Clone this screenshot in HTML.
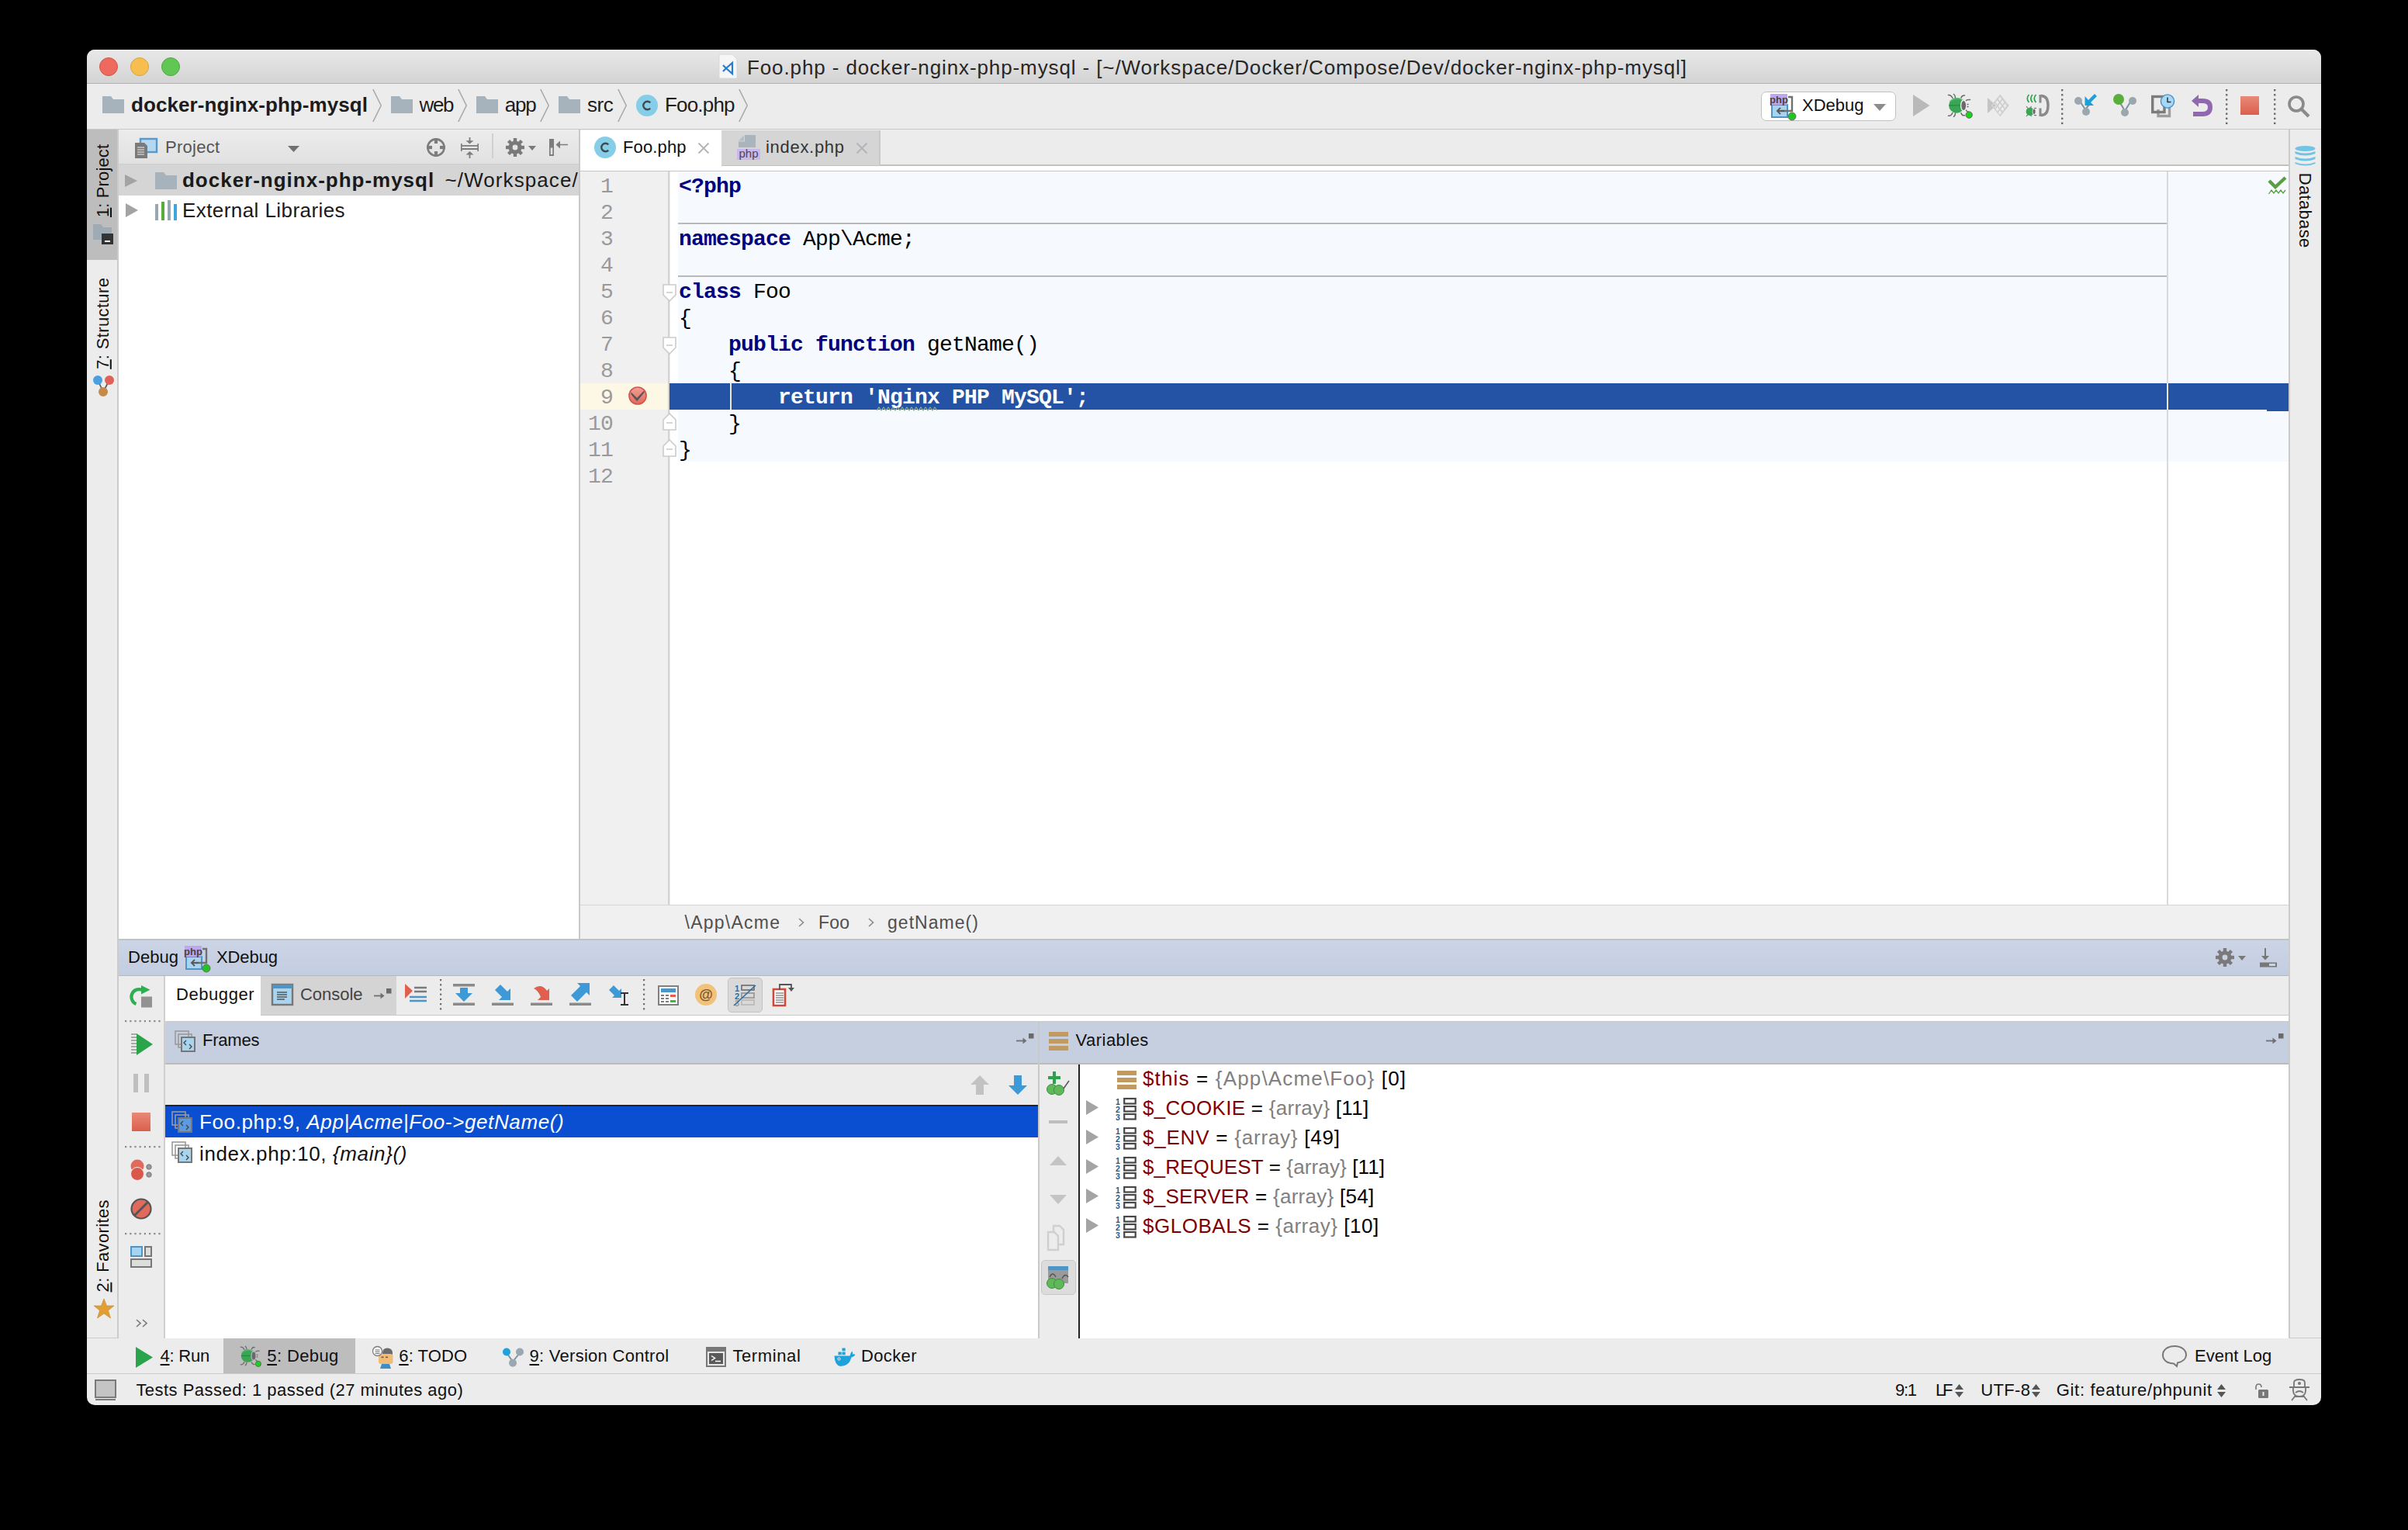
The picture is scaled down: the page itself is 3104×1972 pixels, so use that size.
<!DOCTYPE html>
<html><head><meta charset="utf-8">
<style>
html,body{margin:0;padding:0;}
body{width:3104px;height:1972px;background:#000;position:relative;overflow:hidden;font-family:"Liberation Sans",sans-serif;color:#000;}
.a{position:absolute;box-sizing:border-box;}
.t{position:absolute;white-space:pre;line-height:1;}
.win{left:112px;top:64px;width:2880px;height:1747px;background:#ececec;border-radius:10px;overflow:hidden;}
.in{position:absolute;left:-112px;top:-64px;width:3104px;height:1972px;}
svg{position:absolute;overflow:visible;}
</style></head><body>
<div class="a win"><div class="in">
<div class="a" style="left:112px;top:64px;width:2880px;height:44px;background:linear-gradient(#e9e9e9,#d3d3d3);border-bottom:1px solid #b1b1b1;"></div>
<div class="a" style="left:112px;top:108px;width:2880px;height:59px;background:#ececec;border-bottom:1px solid #c8c8c8;"></div>
<div class="a" style="left:112px;top:167px;width:41px;height:1558px;background:#ececec;border-right:2px solid #cbcbcb;"></div>
<div class="a" style="left:112px;top:167px;width:39px;height:168px;background:#bdbdbd;"></div>
<div class="a" style="left:2950px;top:167px;width:42px;height:1558px;background:#ececec;border-left:2px solid #cbcbcb;"></div>
<div class="a" style="left:153px;top:167px;width:594px;height:1043px;background:#fff;"></div>
<div class="a" style="left:153px;top:167px;width:594px;height:45px;background:linear-gradient(#ececec,#e1e1e1);border-bottom:1px solid #cdcdcd;"></div>
<div class="a" style="left:153px;top:212px;width:594px;height:40px;background:#d5d5d5;"></div>
<div class="a" style="left:746px;top:167px;width:2px;height:1043px;background:#c9c9c9;"></div>
<div class="a" style="left:748px;top:167px;width:2202px;height:47px;background:#ececec;border-bottom:2px solid #c2c2c2;"></div>
<div class="a" style="left:748px;top:214px;width:2202px;height:7px;background:#fff;border-bottom:1px solid #c5c5c5;"></div>
<div class="a" style="left:748px;top:168px;width:182px;height:52px;background:#fff;"></div>
<div class="a" style="left:930px;top:168px;width:205px;height:45px;background:#d5d5d5;border-right:2px solid #c9c9c9;"></div>
<div class="a" style="left:748px;top:221px;width:115px;height:945px;background:#f0f0f0;border-right:2px solid #d3d3d3;"></div>
<div class="a" style="left:864px;top:221px;width:2086px;height:945px;background:#fff;"></div>
<div class="a" style="left:874px;top:221px;width:2076px;height:374px;background:#f6f9fe;"></div>
<div class="a" style="left:748px;top:1166px;width:2202px;height:44px;background:#f0f0f0;border-top:1px solid #d5d5d5;"></div>
<div class="a" style="left:153px;top:1210px;width:2797px;height:48px;background:linear-gradient(#ccd5e6,#c3cde0);border-top:2px solid #c2c2c2;border-bottom:1px solid #b9bec8;"></div>
<div class="a" style="left:153px;top:1257px;width:2797px;height:468px;background:#ececec;"></div>
<div class="a" style="left:112px;top:1724px;width:2880px;height:47px;background:#ececec;border-top:1px solid #cbcbcb;border-bottom:1px solid #cbcbcb;"></div>
<svg style="left:128px;top:74px;" width="24" height="24" viewBox="0 0 24 24"><circle cx="12" cy="12" r="11.5" fill="#ee6a5f" stroke="#d2544a" stroke-width="1"/></svg>
<svg style="left:168px;top:74px;" width="24" height="24" viewBox="0 0 24 24"><circle cx="12" cy="12" r="11.5" fill="#f5be4f" stroke="#d9a23f" stroke-width="1"/></svg>
<svg style="left:208px;top:74px;" width="24" height="24" viewBox="0 0 24 24"><circle cx="12" cy="12" r="11.5" fill="#62c655" stroke="#4fa83f" stroke-width="1"/></svg>
<svg style="left:927px;top:70px;" width="24" height="31" viewBox="0 0 24 31"><path d="M0 0H17L23 6V31H0Z" fill="#f6f6f6" stroke="#d8d8d8" stroke-width="1"/><path d="M5 14L9 18L5 22M9 18L17 11V25L9 18" fill="none" stroke="#2a7bd0" stroke-width="2.2"/></svg>
<div class="t" style="left:963.0px;top:73.9px;font-family:'Liberation Sans',sans-serif;font-size:26px;color:#262626;letter-spacing:0.89px;">Foo.php - docker-nginx-php-mysql - [~/Workspace/Docker/Compose/Dev/docker-nginx-php-mysql]</div>
<svg style="left:132px;top:124px;" width="28" height="22" viewBox="0 0 28 22"><path d="M0 0H11L14 4H28V22H0Z" fill="#a7b3bc"/></svg>
<div class="t" style="left:169.0px;top:122.4px;font-family:'Liberation Sans',sans-serif;font-size:26px;color:#1c1c1c;font-weight:bold;letter-spacing:0.08px;">docker-nginx-php-mysql</div>
<svg style="left:480px;top:115px;" width="12" height="42" viewBox="0 0 12 42"><path d="M0.8 0L11.2 21.0L0.8 42" fill="none" stroke="#a9a9a9" stroke-width="1.6"/></svg>
<svg style="left:504px;top:124px;" width="28" height="22" viewBox="0 0 28 22"><path d="M0 0H11L14 4H28V22H0Z" fill="#a7b3bc"/></svg>
<div class="t" style="left:540.5px;top:122.4px;font-family:'Liberation Sans',sans-serif;font-size:26px;color:#1c1c1c;letter-spacing:-1.34px;">web</div>
<svg style="left:590px;top:115px;" width="12" height="42" viewBox="0 0 12 42"><path d="M0.8 0L11.2 21.0L0.8 42" fill="none" stroke="#a9a9a9" stroke-width="1.6"/></svg>
<svg style="left:614px;top:124px;" width="28" height="22" viewBox="0 0 28 22"><path d="M0 0H11L14 4H28V22H0Z" fill="#a7b3bc"/></svg>
<div class="t" style="left:650.7px;top:122.4px;font-family:'Liberation Sans',sans-serif;font-size:26px;color:#1c1c1c;letter-spacing:-1.18px;">app</div>
<svg style="left:696px;top:115px;" width="12" height="42" viewBox="0 0 12 42"><path d="M0.8 0L11.2 21.0L0.8 42" fill="none" stroke="#a9a9a9" stroke-width="1.6"/></svg>
<svg style="left:720px;top:124px;" width="28" height="22" viewBox="0 0 28 22"><path d="M0 0H11L14 4H28V22H0Z" fill="#a7b3bc"/></svg>
<div class="t" style="left:757.0px;top:122.4px;font-family:'Liberation Sans',sans-serif;font-size:26px;color:#1c1c1c;letter-spacing:-0.48px;">src</div>
<svg style="left:796px;top:115px;" width="12" height="42" viewBox="0 0 12 42"><path d="M0.8 0L11.2 21.0L0.8 42" fill="none" stroke="#a9a9a9" stroke-width="1.6"/></svg>
<svg style="left:820px;top:122px;" width="28" height="28" viewBox="0 0 28 28"><circle cx="14.0" cy="14.0" r="14.0" fill="#86cde8"/><path d="M18.2 10.4A5.2 5.2 0 1 0 18.2 17.6" fill="none" stroke="#3f4a50" stroke-width="2.4"/></svg>
<div class="t" style="left:857.0px;top:122.4px;font-family:'Liberation Sans',sans-serif;font-size:26px;color:#1c1c1c;letter-spacing:-0.81px;">Foo.php</div>
<svg style="left:952px;top:115px;" width="12" height="42" viewBox="0 0 12 42"><path d="M0.8 0L11.2 21.0L0.8 42" fill="none" stroke="#a9a9a9" stroke-width="1.6"/></svg>
<div class="a" style="left:2270px;top:118px;width:174px;height:38px;background:#fff;border:1px solid #c2c2c2;border-radius:7px;"></div>
<svg style="left:2282px;top:121px;" width="34" height="34" viewBox="0 0 34 34"><rect x="2" y="14" width="20" height="16" fill="#a8d4f0" stroke="#4d95c6" stroke-width="2"/><path d="M23 4H28V22H14" fill="none" stroke="#707070" stroke-width="2.4"/><path d="M18 22H9M13 18L9 22L13 26" fill="none" stroke="#5a5a5a" stroke-width="2"/><rect x="0" y="0" width="22" height="14" fill="#bba7f2"/><text x="11" y="11.5" font-family="Liberation Sans" font-size="13" font-weight="bold" fill="#444" text-anchor="middle">php</text><circle cx="28" cy="29" r="5" fill="#22c322" stroke="#606060" stroke-width="0.8"/></svg>
<div class="t" style="left:2323.0px;top:125.3px;font-family:'Liberation Sans',sans-serif;font-size:22px;color:#111;">XDebug</div>
<svg style="left:2415px;top:134px;" width="16" height="9" viewBox="0 0 16 9"><path d="M0 0H16L8 9Z" fill="#8c8c8c"/></svg>
<svg style="left:2466px;top:122px;" width="22" height="28" viewBox="0 0 22 28"><path d="M0 0L21.5 14L0 28Z" fill="#b9b9b9"/></svg>
<svg style="left:2510px;top:120px;" width="34.0" height="34.0" viewBox="0 0 34.0 34.0"><g transform="scale(1.0)"><g fill="none" stroke="#6a6a6a" stroke-width="1.5" stroke-linecap="round"><path d="M1.5 2.5Q5 2 7 6.5M8.5 1.5Q10.5 3 10.5 6M18 6Q19 2.5 22.5 3"/><path d="M1.5 29.3Q5 29.8 7 25.3M8.5 30.3Q10.5 28.8 10.5 25.8M18 25.8Q19 29.3 22.5 28.8"/><path d="M24 10Q25 8 29.5 8.5M24.5 14.5H27M24.5 17.5H27M24 21.5Q25 24 28 24.5"/></g><ellipse cx="12.3" cy="15.9" rx="10.2" ry="9.8" fill="#3aa655"/><path d="M3 11Q12 4 21 9" stroke="#5cc274" stroke-width="2" fill="none" opacity="0.6"/><path d="M2.3 15.9H19" stroke="#2a8443" stroke-width="1.3"/><ellipse cx="21.3" cy="15.9" rx="4.4" ry="7.6" fill="#ececec"/><ellipse cx="21.2" cy="15.9" rx="2.9" ry="6" fill="#6a6a6a"/><circle cx="28.2" cy="28.1" r="4.2" fill="#19d419" stroke="#5a5a5a" stroke-width="0.9"/></g></svg>
<svg style="left:2560px;top:120px;" width="32" height="32" viewBox="0 0 32 32"><defs><clipPath id="dia"><path d="M7 15.9L18.3 2L29.6 15.9L18.3 29.8Z"/></clipPath></defs><path d="M2 6L13 16L2 26Z" fill="#c4c4c4"/><g clip-path="url(#dia)" stroke="#cdcdcd" stroke-width="1.6"><path d="M-10.0 32L14.0 0"/><path d="M-3.5 32L20.5 0"/><path d="M3.0 32L27.0 0"/><path d="M9.5 32L33.5 0"/><path d="M16.0 32L40.0 0"/><path d="M22.5 32L46.5 0"/><path d="M-4.0 0L20.0 32"/><path d="M2.5 0L26.5 32"/><path d="M9.0 0L33.0 32"/><path d="M15.5 0L39.5 32"/><path d="M22.0 0L46.0 32"/><path d="M28.5 0L52.5 32"/></g><path d="M7 15.9L18.3 2L29.6 15.9L18.3 29.8Z" fill="none" stroke="#d6d6d6" stroke-width="1"/></svg>
<svg style="left:2610px;top:120px;" width="32" height="32" viewBox="0 0 32 32"><g fill="none" stroke="#2aa44b" stroke-width="1.7"><path d="M5.5 2Q1 7 5.5 12"/><path d="M10 2Q5.5 7 10 12"/><path d="M14.5 2Q10 7 14.5 12"/></g><path d="M21 3.5Q30 3.5 30 16Q30 28.5 21 28.5" fill="none" stroke="#8a8a8a" stroke-width="3.4"/><rect x="18.5" y="2" width="3" height="10.5" fill="#8a8a8a"/><rect x="18.5" y="19.5" width="3" height="10.5" fill="#8a8a8a"/><g stroke="#6a6a6a" stroke-width="1.1" fill="none"><path d="M2 17L4 19.5M8.5 17L7 19.5M2 30L4 27.5M8.5 30L7 27.5M12 20Q13 19 15 19.5M12 28Q13 29 15 28.5"/></g><ellipse cx="6.8" cy="23.8" rx="5.2" ry="5.3" fill="#3aa655"/><ellipse cx="12" cy="23.8" rx="2.4" ry="4" fill="#ececec"/><ellipse cx="12" cy="23.8" rx="1.6" ry="3.2" fill="#6a6a6a"/></svg>
<svg style="left:2657px;top:115px;" width="3" height="44" viewBox="0 0 3 44"><rect x="0" y="0.0" width="2.4" height="2.4" fill="#6c6c6c"/><rect x="0" y="6.1" width="2.4" height="2.4" fill="#6c6c6c"/><rect x="0" y="12.2" width="2.4" height="2.4" fill="#6c6c6c"/><rect x="0" y="18.3" width="2.4" height="2.4" fill="#6c6c6c"/><rect x="0" y="24.4" width="2.4" height="2.4" fill="#6c6c6c"/><rect x="0" y="30.5" width="2.4" height="2.4" fill="#6c6c6c"/><rect x="0" y="36.6" width="2.4" height="2.4" fill="#6c6c6c"/><rect x="0" y="42.7" width="2.4" height="2.4" fill="#6c6c6c"/></svg>
<svg style="left:2869px;top:115px;" width="3" height="44" viewBox="0 0 3 44"><rect x="0" y="0.0" width="2.4" height="2.4" fill="#6c6c6c"/><rect x="0" y="6.1" width="2.4" height="2.4" fill="#6c6c6c"/><rect x="0" y="12.2" width="2.4" height="2.4" fill="#6c6c6c"/><rect x="0" y="18.3" width="2.4" height="2.4" fill="#6c6c6c"/><rect x="0" y="24.4" width="2.4" height="2.4" fill="#6c6c6c"/><rect x="0" y="30.5" width="2.4" height="2.4" fill="#6c6c6c"/><rect x="0" y="36.6" width="2.4" height="2.4" fill="#6c6c6c"/><rect x="0" y="42.7" width="2.4" height="2.4" fill="#6c6c6c"/></svg>
<svg style="left:2931px;top:115px;" width="3" height="44" viewBox="0 0 3 44"><rect x="0" y="0.0" width="2.4" height="2.4" fill="#6c6c6c"/><rect x="0" y="6.1" width="2.4" height="2.4" fill="#6c6c6c"/><rect x="0" y="12.2" width="2.4" height="2.4" fill="#6c6c6c"/><rect x="0" y="18.3" width="2.4" height="2.4" fill="#6c6c6c"/><rect x="0" y="24.4" width="2.4" height="2.4" fill="#6c6c6c"/><rect x="0" y="30.5" width="2.4" height="2.4" fill="#6c6c6c"/><rect x="0" y="36.6" width="2.4" height="2.4" fill="#6c6c6c"/><rect x="0" y="42.7" width="2.4" height="2.4" fill="#6c6c6c"/></svg>
<svg style="left:2674px;top:121px;" width="30" height="30" viewBox="0 0 30 30"><path d="M6 8L14 20M19 14L14 20" stroke="#7f909b" stroke-width="2"/><circle cx="5" cy="9" r="5" fill="#9aa7b0"/><circle cx="15" cy="23" r="5" fill="#9aa7b0"/><path d="M13.5 3V15H25L21 11L29 3L26 0L18 8L13.5 3Z" fill="#1a9fdb"/></svg>
<svg style="left:2724px;top:121px;" width="30" height="30" viewBox="0 0 30 30"><path d="M7 8L15 22M23 9L15 22" stroke="#7f909b" stroke-width="2"/><circle cx="7" cy="7" r="7" fill="#5aae3b"/><circle cx="25" cy="9" r="5" fill="#9aa7b0"/><circle cx="15" cy="24" r="5" fill="#9aa7b0"/></svg>
<svg style="left:2773px;top:121px;" width="30" height="31" viewBox="0 0 30 31"><path d="M9 20V28.5H23.5V17" fill="none" stroke="#9d9d9d" stroke-width="3.4"/><rect x="1.7" y="3.5" width="15.3" height="20" fill="none" stroke="#7b7b7b" stroke-width="3.4"/><circle cx="21" cy="9.5" r="8.6" fill="#a7d8f5" stroke="#4a8fc4" stroke-width="1.4"/><path d="M21 4.5V10.5H25.5" fill="none" stroke="#333" stroke-width="1.5"/></svg>
<svg style="left:2825px;top:122px;" width="28" height="28" viewBox="0 0 28 28"><path d="M0 8L9 0V5H14Q27 5 27 16Q27 28 14 28H2V22H14Q21 22 21 16Q21 11 14 11H9V16Z" fill="#9168b0"/></svg>
<div class="a" style="left:2888px;top:124px;width:24px;height:24px;background:linear-gradient(#e98a78,#db5e4c);"></div>
<svg style="left:2948px;top:122px;" width="30" height="30" viewBox="0 0 30 30"><circle cx="12" cy="12" r="9" fill="none" stroke="#8a8a8a" stroke-width="3.6"/><path d="M18 18L28 28" stroke="#8a8a8a" stroke-width="4.2"/></svg>
<div class="t" style="left:86.0px;top:222.0px;width:98.0px;height:22px;font-size:22px;line-height:22px;color:#111;letter-spacing:0.12px;transform:rotate(-90deg);transform-origin:47.0px 11.0px;"><u style="text-decoration-thickness:2px;text-underline-offset:2px">1</u>: Project</div>
<svg style="left:120px;top:289px;" width="27" height="26" viewBox="0 0 27 26"><path d="M0 0H10L13 4H24V20H0Z" fill="#9eabb5"/><rect x="11" y="12" width="15" height="14" fill="#333"/><rect x="15" y="21" width="7" height="2" fill="#fff"/></svg>
<div class="t" style="left:74.2px;top:405.5px;width:121.7px;height:22px;font-size:22px;line-height:22px;color:#111;letter-spacing:0.36px;transform:rotate(-90deg);transform-origin:58.8px 11.0px;"><u style="text-decoration-thickness:2px;text-underline-offset:2px">7</u>: Structure</div>
<svg style="left:120px;top:483px;" width="27" height="28" viewBox="0 0 27 28"><path d="M6 7L13 22M21 7L13 22" stroke="#555" stroke-width="1.6"/><circle cx="6" cy="7" r="6" fill="#4a9fe0"/><circle cx="21" cy="7" r="6" fill="#e0605a"/><circle cx="13" cy="22" r="6" fill="#c48a4a"/></svg>
<div class="t" style="left:73.6px;top:1594.8px;width:122.9px;height:22px;font-size:22px;line-height:22px;color:#111;letter-spacing:0.36px;transform:rotate(-90deg);transform-origin:59.4px 11.0px;"><u style="text-decoration-thickness:2px;text-underline-offset:2px">2</u>: Favorites</div>
<svg style="left:120.5px;top:1674px;" width="26" height="26" viewBox="0 0 26 26"><path d="M13 0L16.5 9H26L18.5 15L21.5 25L13 19L4.5 25L7.5 15L0 9H9.5Z" fill="#e09e35" stroke="#c98424" stroke-width="0.6"/></svg>
<div class="t" style="left:2922.8px;top:260.2px;width:100.4px;height:22px;font-size:22px;line-height:22px;color:#111;letter-spacing:0.32px;transform:rotate(90deg);transform-origin:48.2px 11.0px;">Database</div>
<svg style="left:2958px;top:188px;" width="27" height="26" viewBox="0 0 27 26"><ellipse cx="13.5" cy="3.5" rx="13" ry="3.5" fill="#72c4e6"/><path d="M0.5 7Q13.5 12 26.5 7V10Q13.5 15 0.5 10Z" fill="#72c4e6"/><path d="M0.5 14Q13.5 19 26.5 14V17Q13.5 22 0.5 17Z" fill="#72c4e6"/><path d="M0.5 21Q13.5 26 26.5 21V23Q13.5 28 0.5 23Z" fill="#72c4e6"/></svg>
<svg style="left:174px;top:178px;" width="30" height="28" viewBox="0 0 30 28"><rect x="7" y="1" width="21" height="17" fill="#b4d8f2" stroke="#5c98c6" stroke-width="2.4"/><path d="M0 6H12L16 10V26H0Z" fill="#7a7a7a"/><path d="M3 12H12M3 15H12M3 18H12M3 21H12" stroke="#eee" stroke-width="1.2"/></svg>
<div class="t" style="left:213.0px;top:178.8px;font-family:'Liberation Sans',sans-serif;font-size:22px;color:#555;letter-spacing:0.26px;">Project</div>
<svg style="left:371px;top:188px;" width="15" height="8" viewBox="0 0 15 8"><path d="M0 0H15L7.5 8Z" fill="#707070"/></svg>
<svg style="left:550px;top:178px;" width="24" height="24" viewBox="0 0 24 24"><circle cx="12" cy="12" r="10.6" fill="none" stroke="#7d7d7d" stroke-width="2.6"/><rect x="9.9" y="0" width="4.2" height="7" fill="#7d7d7d"/><rect x="9.9" y="17" width="4.2" height="7" fill="#7d7d7d"/><rect x="0" y="9.9" width="7" height="4.2" fill="#7d7d7d"/><rect x="17" y="9.9" width="7" height="4.2" fill="#7d7d7d"/></svg>
<svg style="left:594px;top:177px;" width="23" height="27" viewBox="0 0 23 27"><path d="M1 10.8H22M1 15H22" stroke="#7d7d7d" stroke-width="1.8"/><path d="M0.8 8V18M22.2 8V18" stroke="#7d7d7d" stroke-width="1.6"/><path d="M11.5 0V5M11.5 22V27" stroke="#7d7d7d" stroke-width="1.8"/><path d="M6.5 4.2H16.5L11.5 8.5Z M6.5 22.5H16.5L11.5 18Z" fill="#7d7d7d"/></svg>
<div class="a" style="left:634px;top:172px;width:2px;height:32px;background:#d0d0d0;"></div>
<svg style="left:652px;top:178px;" width="40" height="24" viewBox="0 0 40 24"><g transform="translate(12 12)"><rect x="-2.2" y="-12" width="4.4" height="6" fill="#7a7a7a" transform="rotate(0)"/><rect x="-2.2" y="-12" width="4.4" height="6" fill="#7a7a7a" transform="rotate(45)"/><rect x="-2.2" y="-12" width="4.4" height="6" fill="#7a7a7a" transform="rotate(90)"/><rect x="-2.2" y="-12" width="4.4" height="6" fill="#7a7a7a" transform="rotate(135)"/><rect x="-2.2" y="-12" width="4.4" height="6" fill="#7a7a7a" transform="rotate(180)"/><rect x="-2.2" y="-12" width="4.4" height="6" fill="#7a7a7a" transform="rotate(225)"/><rect x="-2.2" y="-12" width="4.4" height="6" fill="#7a7a7a" transform="rotate(270)"/><rect x="-2.2" y="-12" width="4.4" height="6" fill="#7a7a7a" transform="rotate(315)"/><circle r="8.6" fill="#7a7a7a"/><circle r="3.4" fill="#e6e6e6"/></g><path d="M29 10H39L34 16Z" fill="#7a7a7a"/></svg>
<svg style="left:707px;top:178px;" width="26" height="24" viewBox="0 0 26 24"><rect x="1" y="1" width="6" height="22" fill="#7d7d7d"/><rect x="2.7" y="12.5" width="2.6" height="8.5" fill="#e4e4e4"/><path d="M13 8.5H25" stroke="#7d7d7d" stroke-width="1.6"/><path d="M9.5 8.5L15 3.5V13.5Z" fill="#7d7d7d"/></svg>
<svg style="left:161px;top:225px;" width="16" height="16" viewBox="0 0 16 16"><path d="M0 0L16 8.0L0 16Z" fill="#a3a3a3"/></svg>
<svg style="left:200px;top:222px;" width="28" height="22" viewBox="0 0 28 22"><path d="M0 0H11L14 4H28V22H0Z" fill="#a7b3bc"/></svg>
<div class="t" style="left:235.0px;top:218.9px;font-family:'Liberation Sans',sans-serif;font-size:26px;color:#1a1a1a;font-weight:bold;letter-spacing:0.99px;">docker-nginx-php-mysql</div>
<div class="t" style="left:573.6px;top:218.9px;font-family:'Liberation Sans',sans-serif;font-size:26px;color:#1a1a1a;letter-spacing:1.08px;">~/Workspace/</div>
<svg style="left:162px;top:262px;" width="16" height="18" viewBox="0 0 16 18"><path d="M0 0L16 9.0L0 18Z" fill="#a3a3a3"/></svg>
<svg style="left:200px;top:258px;" width="28" height="26" viewBox="0 0 28 26"><rect x="0" y="5" width="4" height="21" fill="#9aa7b0"/><rect x="8" y="2" width="4" height="24" fill="#56ad3a"/><rect x="16" y="0" width="4" height="26" fill="#9aa7b0"/><rect x="24" y="5" width="4" height="21" fill="#41a5dc"/></svg>
<div class="t" style="left:235.0px;top:257.9px;font-family:'Liberation Sans',sans-serif;font-size:26px;color:#1a1a1a;letter-spacing:0.43px;">External Libraries</div>
<svg style="left:766px;top:176px;" width="28" height="28" viewBox="0 0 28 28"><circle cx="14.0" cy="14.0" r="14.0" fill="#86cde8"/><path d="M18.2 10.4A5.2 5.2 0 1 0 18.2 17.6" fill="none" stroke="#3f4a50" stroke-width="2.4"/></svg>
<div class="t" style="left:803.0px;top:179.3px;font-family:'Liberation Sans',sans-serif;font-size:22px;color:#111;letter-spacing:0.13px;">Foo.php</div>
<svg style="left:900px;top:184px;" width="14" height="14" viewBox="0 0 14 14"><path d="M0.5 0.5L13.5 13.5M13.5 0.5L0.5 13.5" stroke="#b0b4b8" stroke-width="1.8"/></svg>
<svg style="left:950px;top:174px;" width="31" height="32" viewBox="0 0 31 32"><path d="M10 0H24V16H2V8.5H10Z" fill="#a9b4bc"/><path d="M2 7.5L9 0.5V7.5Z" fill="#b3bdc4"/><rect x="0" y="18" width="30" height="14" fill="#c9b8ea"/><text x="15" y="29.2" font-family="Liberation Sans" font-size="15" fill="#4d4458" text-anchor="middle">php</text></svg>
<div class="t" style="left:987.0px;top:179.3px;font-family:'Liberation Sans',sans-serif;font-size:22px;color:#333;letter-spacing:0.70px;">index.php</div>
<svg style="left:1104px;top:184px;" width="14" height="14" viewBox="0 0 14 14"><path d="M0.5 0.5L13.5 13.5M13.5 0.5L0.5 13.5" stroke="#b0b4b8" stroke-width="1.8"/></svg>
<div class="a" style="left:874px;top:287px;width:1920px;height:2px;background:#b9b9b9;"></div>
<div class="a" style="left:874px;top:355px;width:1920px;height:2px;background:#b9b9b9;"></div>
<div class="a" style="left:2793px;top:221px;width:2px;height:945px;background:#dadada;"></div>
<div class="a" style="left:748px;top:494px;width:113px;height:34px;background:#fdf8e6;"></div>
<div class="a" style="left:863px;top:494px;width:2087px;height:34px;background:#2453a6;"></div>
<div class="a" style="left:2922px;top:526px;width:28px;height:4px;background:#2453a6;"></div>
<div class="a" style="left:2793px;top:494px;width:2px;height:34px;background:#efe8d4;"></div>
<div class="a" style="left:941px;top:493px;width:2px;height:35px;background:#efe8d4;"></div>
<div class="t" style="left:774.0px;top:226.7px;font-family:'Liberation Mono',monospace;font-size:28px;color:#9a9a9a;letter-spacing:-0.80px;">1</div>
<div class="t" style="left:774.0px;top:260.7px;font-family:'Liberation Mono',monospace;font-size:28px;color:#9a9a9a;letter-spacing:-0.80px;">2</div>
<div class="t" style="left:774.0px;top:294.7px;font-family:'Liberation Mono',monospace;font-size:28px;color:#9a9a9a;letter-spacing:-0.80px;">3</div>
<div class="t" style="left:774.0px;top:328.7px;font-family:'Liberation Mono',monospace;font-size:28px;color:#9a9a9a;letter-spacing:-0.80px;">4</div>
<div class="t" style="left:774.0px;top:362.7px;font-family:'Liberation Mono',monospace;font-size:28px;color:#9a9a9a;letter-spacing:-0.80px;">5</div>
<div class="t" style="left:774.0px;top:396.7px;font-family:'Liberation Mono',monospace;font-size:28px;color:#9a9a9a;letter-spacing:-0.80px;">6</div>
<div class="t" style="left:774.0px;top:430.7px;font-family:'Liberation Mono',monospace;font-size:28px;color:#9a9a9a;letter-spacing:-0.80px;">7</div>
<div class="t" style="left:774.0px;top:464.7px;font-family:'Liberation Mono',monospace;font-size:28px;color:#9a9a9a;letter-spacing:-0.80px;">8</div>
<div class="t" style="left:774.0px;top:498.7px;font-family:'Liberation Mono',monospace;font-size:28px;color:#9a9a9a;letter-spacing:-0.80px;">9</div>
<div class="t" style="left:758.0px;top:532.7px;font-family:'Liberation Mono',monospace;font-size:28px;color:#9a9a9a;letter-spacing:-0.80px;">10</div>
<div class="t" style="left:758.0px;top:566.7px;font-family:'Liberation Mono',monospace;font-size:28px;color:#9a9a9a;letter-spacing:-0.80px;">11</div>
<div class="t" style="left:758.0px;top:600.7px;font-family:'Liberation Mono',monospace;font-size:28px;color:#9a9a9a;letter-spacing:-0.80px;">12</div>
<div class="t" style="left:875.0px;top:226.7px;font-family:'Liberation Mono',monospace;font-size:28px;letter-spacing:-0.80px;"><b style="color:#000080">&lt;?php</b></div>
<div class="t" style="left:875.0px;top:294.7px;font-family:'Liberation Mono',monospace;font-size:28px;letter-spacing:-0.80px;"><b style="color:#000080">namespace</b><span style="color:#000"> App\Acme;</span></div>
<div class="t" style="left:875.0px;top:362.7px;font-family:'Liberation Mono',monospace;font-size:28px;letter-spacing:-0.80px;"><b style="color:#000080">class</b><span style="color:#000"> Foo</span></div>
<div class="t" style="left:875.0px;top:396.7px;font-family:'Liberation Mono',monospace;font-size:28px;letter-spacing:-0.80px;"><span style="color:#000">{</span></div>
<div class="t" style="left:939.0px;top:430.7px;font-family:'Liberation Mono',monospace;font-size:28px;letter-spacing:-0.80px;"><b style="color:#000080">public</b><span style="color:#000"> </span><b style="color:#000080">function</b><span style="color:#000"> getName()</span></div>
<div class="t" style="left:939.0px;top:464.7px;font-family:'Liberation Mono',monospace;font-size:28px;letter-spacing:-0.80px;"><span style="color:#000">{</span></div>
<div class="t" style="left:1003.0px;top:498.7px;font-family:'Liberation Mono',monospace;font-size:28px;letter-spacing:-0.80px;"><b style="color:#fff">return 'Nginx PHP MySQL';</b></div>
<div class="t" style="left:939.0px;top:532.7px;font-family:'Liberation Mono',monospace;font-size:28px;letter-spacing:-0.80px;"><span style="color:#000">}</span></div>
<div class="t" style="left:875.0px;top:566.7px;font-family:'Liberation Mono',monospace;font-size:28px;letter-spacing:-0.80px;"><span style="color:#000">}</span></div>
<svg style="left:1130px;top:524px;" width="80" height="6" viewBox="0 0 80 6"><path d="M0 5L3 1L6 5L9 1L12 5L15 1L18 5L21 1L24 5L27 1L30 5L33 1L36 5L39 1L42 5L45 1L48 5L51 1L54 5L57 1L60 5L63 1L66 5L69 1L72 5L75 1L78 5" fill="none" stroke="#8fb38a" stroke-width="1.2"/></svg>
<svg style="left:810px;top:498px;" width="24" height="24" viewBox="0 0 24 24"><defs><linearGradient id="bp" x1="0" y1="0" x2="0" y2="1"><stop offset="0" stop-color="#f0a096"/><stop offset="1" stop-color="#e06a5e"/></linearGradient></defs><circle cx="12" cy="12" r="11" fill="url(#bp)" stroke="#d5554b" stroke-width="1.7"/><path d="M3.6 7.6L11.1 15L20.2 5.4L20.6 7.8L11.1 19.2L3.4 10.2Z" fill="#555"/></svg>
<svg style="left:853.5px;top:366px;" width="18" height="23" viewBox="0 0 18 23"><path d="M1 1H17V14L9 22L1 14Z" fill="#fff" stroke="#cbcbcb" stroke-width="1.6"/><path d="M5 11H13" stroke="#cbcbcb" stroke-width="1.6"/></svg>
<svg style="left:853.5px;top:434px;" width="18" height="23" viewBox="0 0 18 23"><path d="M1 1H17V14L9 22L1 14Z" fill="#fff" stroke="#cbcbcb" stroke-width="1.6"/><path d="M5 11H13" stroke="#cbcbcb" stroke-width="1.6"/></svg>
<svg style="left:853.5px;top:533px;" width="18" height="23" viewBox="0 0 18 23"><path d="M1 21H17V8L9 0L1 8Z" fill="#fff" stroke="#cbcbcb" stroke-width="1.6"/><path d="M5 12H13" stroke="#cbcbcb" stroke-width="1.6"/></svg>
<svg style="left:853.5px;top:567px;" width="18" height="23" viewBox="0 0 18 23"><path d="M1 21H17V8L9 0L1 8Z" fill="#fff" stroke="#cbcbcb" stroke-width="1.6"/><path d="M5 12H13" stroke="#cbcbcb" stroke-width="1.6"/></svg>
<svg style="left:2924px;top:226px;" width="23" height="25" viewBox="0 0 23 25"><path d="M1 7L9 15L22 3" fill="none" stroke="#5a9e42" stroke-width="4.4"/><path d="M0.5 24L4 19L7 23L10 19L13 23L16 19L19 23L22 19" fill="none" stroke="#5a9e42" stroke-width="1.3"/></svg>
<div class="t" style="left:882.5px;top:1178.0px;font-family:'Liberation Sans',sans-serif;font-size:23px;color:#4f4f4f;letter-spacing:1.25px;">\App\Acme</div>
<svg style="left:1029px;top:1183px;" width="8" height="12" viewBox="0 0 8 12"><path d="M1 1L6.5 6L1 11" fill="none" stroke="#8a8a8a" stroke-width="1.6"/></svg>
<div class="t" style="left:1055.0px;top:1178.0px;font-family:'Liberation Sans',sans-serif;font-size:23px;color:#4f4f4f;letter-spacing:0.18px;">Foo</div>
<svg style="left:1119px;top:1183px;" width="8" height="12" viewBox="0 0 8 12"><path d="M1 1L6.5 6L1 11" fill="none" stroke="#8a8a8a" stroke-width="1.6"/></svg>
<div class="t" style="left:1144.0px;top:1178.0px;font-family:'Liberation Sans',sans-serif;font-size:23px;color:#4f4f4f;letter-spacing:1.04px;">getName()</div>
<div class="a" style="left:153px;top:1257px;width:60px;height:468px;background:#ececec;border-right:2px solid #cfcfcf;"></div>
<div class="a" style="left:213px;top:1257px;width:123px;height:59px;background:#fff;"></div>
<div class="a" style="left:336px;top:1257px;width:175px;height:52px;background:#d4d4d4;"></div>
<div class="a" style="left:511px;top:1257px;width:2439px;height:52px;background:#ececec;border-bottom:1px solid #c9c9c9;"></div>
<div class="a" style="left:213px;top:1309px;width:2737px;height:8px;background:#fff;border-bottom:1px solid #c9c9c9;"></div>
<div class="a" style="left:336px;top:1308px;width:175px;height:1px;background:#c9c9c9;"></div>
<div class="a" style="left:153px;top:1257px;width:2797px;height:1px;background:#b3b9c3;"></div>
<div class="a" style="left:213px;top:1317px;width:2737px;height:55px;background:#c6cfe0;border-bottom:2px solid #bcbcbc;"></div>
<div class="a" style="left:1338px;top:1317px;width:2px;height:408px;background:#c9c9c9;"></div>
<div class="a" style="left:213px;top:1372px;width:1125px;height:52px;background:#ececec;"></div>
<div class="a" style="left:213px;top:1424px;width:1125px;height:2px;background:#26231f;"></div>
<div class="a" style="left:213px;top:1426px;width:1125px;height:40px;background:#0a4fd2;"></div>
<div class="a" style="left:213px;top:1466px;width:1125px;height:259px;background:#fff;"></div>
<div class="a" style="left:1340px;top:1372px;width:50px;height:353px;background:#ececec;"></div>
<div class="a" style="left:1390px;top:1372px;width:2px;height:353px;background:#222;"></div>
<div class="a" style="left:1392px;top:1372px;width:1558px;height:353px;background:#fff;"></div>
<div class="t" style="left:165.0px;top:1223.3px;font-family:'Liberation Sans',sans-serif;font-size:22px;color:#111;letter-spacing:0.04px;">Debug</div>
<svg style="left:238px;top:1219px;" width="34" height="34" viewBox="0 0 34 34"><rect x="2" y="14" width="20" height="16" fill="#a8d4f0" stroke="#4d95c6" stroke-width="2"/><path d="M23 4H28V22H14" fill="none" stroke="#707070" stroke-width="2.4"/><path d="M18 22H9M13 18L9 22L13 26" fill="none" stroke="#5a5a5a" stroke-width="2"/><rect x="0" y="0" width="22" height="14" fill="#bba7f2"/><text x="11" y="11.5" font-family="Liberation Sans" font-size="13" font-weight="bold" fill="#444" text-anchor="middle">php</text><circle cx="28" cy="29" r="5" fill="#22c322" stroke="#606060" stroke-width="0.8"/></svg>
<div class="t" style="left:279.0px;top:1223.3px;font-family:'Liberation Sans',sans-serif;font-size:22px;color:#111;letter-spacing:-0.10px;">XDebug</div>
<svg style="left:2856px;top:1222px;" width="40" height="24" viewBox="0 0 40 24"><g transform="translate(12 12)"><rect x="-2.2" y="-12" width="4.4" height="6" fill="#7a7a7a" transform="rotate(0)"/><rect x="-2.2" y="-12" width="4.4" height="6" fill="#7a7a7a" transform="rotate(45)"/><rect x="-2.2" y="-12" width="4.4" height="6" fill="#7a7a7a" transform="rotate(90)"/><rect x="-2.2" y="-12" width="4.4" height="6" fill="#7a7a7a" transform="rotate(135)"/><rect x="-2.2" y="-12" width="4.4" height="6" fill="#7a7a7a" transform="rotate(180)"/><rect x="-2.2" y="-12" width="4.4" height="6" fill="#7a7a7a" transform="rotate(225)"/><rect x="-2.2" y="-12" width="4.4" height="6" fill="#7a7a7a" transform="rotate(270)"/><rect x="-2.2" y="-12" width="4.4" height="6" fill="#7a7a7a" transform="rotate(315)"/><circle r="8.6" fill="#7a7a7a"/><circle r="3.4" fill="#c9d2e4"/></g><path d="M29 10H39L34 16Z" fill="#7a7a7a"/></svg>
<svg style="left:2913px;top:1222px;" width="24" height="25" viewBox="0 0 24 25"><path d="M7 0V11" stroke="#777" stroke-width="2"/><path d="M2 10H12L7 15.5Z" fill="#777"/><rect x="0" y="18.5" width="22" height="6" fill="#777"/><rect x="12" y="20" width="8" height="3" fill="#cbd4e5"/></svg>
<svg style="left:167px;top:1269px;" width="30" height="30" viewBox="0 0 30 30"><path d="M16 6.8A9.6 9.6 0 0 0 8.5 25" fill="none" stroke="#2fae4f" stroke-width="4.2"/><path d="M15 1L26.5 6.8L15 12.5Z" fill="#2fae4f"/><rect x="15" y="15.5" width="14" height="14" fill="#929292"/></svg>
<svg style="left:161px;top:1315px;" width="47" height="3" viewBox="0 0 47 3"><rect x="0.0" y="0" width="2.2" height="2.2" fill="#8a8a8a"/><rect x="6.2" y="0" width="2.2" height="2.2" fill="#8a8a8a"/><rect x="12.4" y="0" width="2.2" height="2.2" fill="#8a8a8a"/><rect x="18.6" y="0" width="2.2" height="2.2" fill="#8a8a8a"/><rect x="24.8" y="0" width="2.2" height="2.2" fill="#8a8a8a"/><rect x="31.0" y="0" width="2.2" height="2.2" fill="#8a8a8a"/><rect x="37.2" y="0" width="2.2" height="2.2" fill="#8a8a8a"/><rect x="43.4" y="0" width="2.2" height="2.2" fill="#8a8a8a"/></svg>
<svg style="left:168.5px;top:1332px;" width="29" height="28" viewBox="0 0 29 28"><path d="M0 1H7M0 5H7M0 9H7M0 13H7M0 17H7M0 21H7M0 25H7" stroke="#666" stroke-width="1.2"/><path d="M7 0L28 14L7 28Z" fill="#2aa44b"/></svg>
<div class="a" style="left:172px;top:1384px;width:6px;height:24px;background:#bfbfbf;"></div>
<div class="a" style="left:186px;top:1384px;width:6px;height:24px;background:#bfbfbf;"></div>
<div class="a" style="left:170px;top:1434px;width:24px;height:24px;background:linear-gradient(#e98a78,#db5e4c);"></div>
<svg style="left:161px;top:1477px;" width="47" height="3" viewBox="0 0 47 3"><rect x="0.0" y="0" width="2.2" height="2.2" fill="#8a8a8a"/><rect x="6.2" y="0" width="2.2" height="2.2" fill="#8a8a8a"/><rect x="12.4" y="0" width="2.2" height="2.2" fill="#8a8a8a"/><rect x="18.6" y="0" width="2.2" height="2.2" fill="#8a8a8a"/><rect x="24.8" y="0" width="2.2" height="2.2" fill="#8a8a8a"/><rect x="31.0" y="0" width="2.2" height="2.2" fill="#8a8a8a"/><rect x="37.2" y="0" width="2.2" height="2.2" fill="#8a8a8a"/><rect x="43.4" y="0" width="2.2" height="2.2" fill="#8a8a8a"/></svg>
<svg style="left:168px;top:1494px;" width="29" height="28" viewBox="0 0 29 28"><circle cx="9" cy="9" r="8.5" fill="#e06a5c"/><circle cx="9" cy="19" r="8.5" fill="#d9584a" stroke="#f2f2f2" stroke-width="1"/><circle cx="24" cy="10" r="3.2" fill="#999" stroke="#777"/><circle cx="24" cy="20" r="3.2" fill="#999" stroke="#777"/></svg>
<svg style="left:168px;top:1544px;" width="28" height="28" viewBox="0 0 28 28"><circle cx="14" cy="14" r="12.5" fill="#e06a5c" stroke="#555" stroke-width="2.2"/><path d="M5 23L23 5" stroke="#555" stroke-width="3"/></svg>
<svg style="left:161px;top:1589px;" width="47" height="3" viewBox="0 0 47 3"><rect x="0.0" y="0" width="2.2" height="2.2" fill="#8a8a8a"/><rect x="6.2" y="0" width="2.2" height="2.2" fill="#8a8a8a"/><rect x="12.4" y="0" width="2.2" height="2.2" fill="#8a8a8a"/><rect x="18.6" y="0" width="2.2" height="2.2" fill="#8a8a8a"/><rect x="24.8" y="0" width="2.2" height="2.2" fill="#8a8a8a"/><rect x="31.0" y="0" width="2.2" height="2.2" fill="#8a8a8a"/><rect x="37.2" y="0" width="2.2" height="2.2" fill="#8a8a8a"/><rect x="43.4" y="0" width="2.2" height="2.2" fill="#8a8a8a"/></svg>
<svg style="left:168px;top:1606px;" width="28" height="28" viewBox="0 0 28 28"><rect x="1" y="1" width="14" height="12" fill="#a8d4f0" stroke="#4d95c6" stroke-width="2"/><rect x="19" y="1" width="8" height="12" fill="#ddd" stroke="#777" stroke-width="2"/><rect x="1" y="17" width="26" height="10" fill="#ddd" stroke="#777" stroke-width="2"/></svg>
<svg style="left:175px;top:1700px;" width="16" height="11" viewBox="0 0 16 11"><path d="M1 1L6 5.5L1 10M9 1L14 5.5L9 10" fill="none" stroke="#777" stroke-width="1.6"/></svg>
<div class="t" style="left:227.0px;top:1271.3px;font-family:'Liberation Sans',sans-serif;font-size:22px;color:#111;letter-spacing:0.57px;">Debugger</div>
<svg style="left:350px;top:1268px;" width="28" height="28" viewBox="0 0 28 28"><rect x="1" y="1" width="26" height="26" fill="#a8d4f0" stroke="#777" stroke-width="2.4"/><rect x="1" y="1" width="26" height="5" fill="#4d95c6"/><path d="M7 11H20M7 14H20M7 17H20M7 20H17" stroke="#555" stroke-width="1.3"/></svg>
<div class="t" style="left:387.0px;top:1271.3px;font-family:'Liberation Sans',sans-serif;font-size:22px;color:#444;letter-spacing:-0.04px;">Console</div>
<svg style="left:481.7px;top:1274px;" width="24" height="16" viewBox="0 0 24 16"><path d="M0 9.5H9" stroke="#707070" stroke-width="1.8"/><path d="M8.5 5.5L13.5 9.5L8.5 13.5Z" fill="#707070"/><rect x="16" y="0" width="6.5" height="6.5" fill="#6a6a6a"/></svg>
<svg style="left:522px;top:1268px;" width="28" height="28" viewBox="0 0 28 28"><path d="M0 0L10 9L0 19Z" fill="#e0604f"/><path d="M12 5H28M12 10H28" stroke="#7a7a7a" stroke-width="2.6"/><path d="M6 17H28M6 22H28" stroke="#4d95c6" stroke-width="2.6"/></svg>
<svg style="left:567px;top:1262px;" width="3" height="44" viewBox="0 0 3 44"><rect x="0" y="0.0" width="2.2" height="2.2" fill="#6c6c6c"/><rect x="0" y="6.2" width="2.2" height="2.2" fill="#6c6c6c"/><rect x="0" y="12.4" width="2.2" height="2.2" fill="#6c6c6c"/><rect x="0" y="18.6" width="2.2" height="2.2" fill="#6c6c6c"/><rect x="0" y="24.8" width="2.2" height="2.2" fill="#6c6c6c"/><rect x="0" y="31.0" width="2.2" height="2.2" fill="#6c6c6c"/><rect x="0" y="37.2" width="2.2" height="2.2" fill="#6c6c6c"/></svg>
<svg style="left:829px;top:1262px;" width="3" height="44" viewBox="0 0 3 44"><rect x="0" y="0.0" width="2.2" height="2.2" fill="#6c6c6c"/><rect x="0" y="6.2" width="2.2" height="2.2" fill="#6c6c6c"/><rect x="0" y="12.4" width="2.2" height="2.2" fill="#6c6c6c"/><rect x="0" y="18.6" width="2.2" height="2.2" fill="#6c6c6c"/><rect x="0" y="24.8" width="2.2" height="2.2" fill="#6c6c6c"/><rect x="0" y="31.0" width="2.2" height="2.2" fill="#6c6c6c"/><rect x="0" y="37.2" width="2.2" height="2.2" fill="#6c6c6c"/></svg>
<svg style="left:584px;top:1268px;" width="28" height="28" viewBox="0 0 28 28"><rect x="0" y="0" width="28" height="3.5" fill="#8a8a8a"/><rect x="0" y="24.5" width="28" height="3.5" fill="#8a8a8a"/><path d="M9 5H19V12H25L14 23L3 12H9Z" fill="#3d9ad6"/></svg>
<svg style="left:634px;top:1268px;" width="28" height="28" viewBox="0 0 28 28"><rect x="0" y="24.5" width="28" height="3.5" fill="#8a8a8a"/><path d="M4 5L8 1L17 10L21 6V21H6L10 17L1 8Z" fill="#3d9ad6" transform="translate(3,0)"/></svg>
<svg style="left:684px;top:1268px;" width="28" height="28" viewBox="0 0 28 28"><rect x="0" y="24.5" width="28" height="3.5" fill="#8a8a8a"/><path d="M1 6Q11 -1 18 9L21 6V21H6L10 17Q7 9 1 6Z" fill="#e0604f" transform="translate(3,0)"/></svg>
<svg style="left:734px;top:1268px;" width="28" height="28" viewBox="0 0 28 28"><rect x="0" y="24.5" width="28" height="3.5" fill="#8a8a8a"/><path d="M4 20L0 16L12 4L8 0H24V16L20 12L8 24Z" fill="#3d9ad6" transform="translate(2,-1)"/></svg>
<svg style="left:784px;top:1268px;" width="28" height="28" viewBox="0 0 28 28"><path d="M3 2L6 -1L13 6L16 3V15H4L7 12L0 5Z" fill="#3d9ad6" transform="translate(1,3)"/><path d="M16 12H26M16 27H26M21 12V27" fill="none" stroke="#333" stroke-width="2"/></svg>
<svg style="left:848px;top:1270px;" width="27" height="26" viewBox="0 0 27 26"><rect x="1" y="1" width="25" height="24" fill="#fafafa" stroke="#808080" stroke-width="2"/><rect x="4" y="4" width="19" height="5" fill="#4d95c6"/><path d="M4 13H8M10 13H14M4 17H8M10 17H14M4 21H8M10 21H14" stroke="#555" stroke-width="1.6"/><rect x="16" y="12" width="7" height="3" fill="#e0604f"/><rect x="16" y="19" width="7" height="3" fill="#3cb83c"/></svg>
<svg style="left:896px;top:1268px;" width="28" height="28" viewBox="0 0 28 28"><circle cx="14" cy="14" r="14" fill="#f2c27a"/><text x="14" y="20" font-family="Liberation Sans" font-size="18" font-weight="bold" fill="#7a5a30" text-anchor="middle">@</text></svg>
<div class="a" style="left:938px;top:1260px;width:45px;height:45px;background:#d9d9d9;border:1.5px solid #c3c3c3;border-radius:5px;"></div>
<svg style="left:945px;top:1268px;" width="30" height="28" viewBox="0 0 30 28"><text x="5" y="10" font-family="Liberation Sans" font-size="11" font-weight="bold" fill="#2a6fa8" text-anchor="middle">1</text><text x="5" y="20" font-family="Liberation Sans" font-size="11" font-weight="bold" fill="#2a6fa8" text-anchor="middle">2</text><text x="5" y="29" font-family="Liberation Sans" font-size="11" font-weight="bold" fill="#999" text-anchor="middle">3</text><rect x="11" y="2" width="16" height="6" fill="none" stroke="#777" stroke-width="1.8"/><rect x="11" y="12" width="16" height="6" fill="none" stroke="#999" stroke-width="1.8"/><rect x="11" y="21" width="16" height="6" fill="none" stroke="#bbb" stroke-width="1.8"/><path d="M1 28L29 2" stroke="#2a6fa8" stroke-width="1.6"/></svg>
<svg style="left:996px;top:1268px;" width="28" height="29" viewBox="0 0 28 29"><path d="M5 7H16V28H1V7Z" fill="#fff" stroke="#d0473c" stroke-width="2.6"/><path d="M4 12H14M4 15H14M4 18H14M4 21H14M4 24H14" stroke="#555" stroke-width="1.2"/><path d="M9 8V1H24V6" fill="none" stroke="#555" stroke-width="1.8"/><path d="M20 5H28L24 10Z" fill="#555"/></svg>
<svg style="left:225px;top:1328px;" width="27" height="28" viewBox="0 0 27 28"><rect x="1" y="1" width="17" height="17" fill="none" stroke="#9a9a9a" stroke-width="1.6"/><rect x="5" y="5" width="17" height="17" fill="none" stroke="#9a9a9a" stroke-width="1.6"/><rect x="9" y="9" width="17" height="18" fill="#a8d4f0" stroke="#777" stroke-width="2"/><path d="M15 13L12 16L15 19M19 18L22 21L19 24" fill="none" stroke="#444" stroke-width="1.3"/></svg>
<div class="t" style="left:261.0px;top:1329.9px;font-family:'Liberation Sans',sans-serif;font-size:22px;color:#111;letter-spacing:-0.21px;">Frames</div>
<svg style="left:1309.5px;top:1332px;" width="24" height="16" viewBox="0 0 24 16"><path d="M0 9.5H9" stroke="#707070" stroke-width="1.8"/><path d="M8.5 5.5L13.5 9.5L8.5 13.5Z" fill="#707070"/><rect x="16" y="0" width="6.5" height="6.5" fill="#6a6a6a"/></svg>
<svg style="left:1351.5px;top:1330px;" width="25" height="24" viewBox="0 0 25 24"><rect x="0" y="0" width="25" height="6" fill="#c19a62"/><rect x="0" y="9" width="25" height="6" fill="#c19a62"/><rect x="0" y="18" width="25" height="6" fill="#c19a62"/></svg>
<div class="t" style="left:1386.6px;top:1329.9px;font-family:'Liberation Sans',sans-serif;font-size:22px;color:#111;letter-spacing:0.46px;">Variables</div>
<svg style="left:2921px;top:1332px;" width="24" height="16" viewBox="0 0 24 16"><path d="M0 9.5H9" stroke="#707070" stroke-width="1.8"/><path d="M8.5 5.5L13.5 9.5L8.5 13.5Z" fill="#707070"/><rect x="16" y="0" width="6.5" height="6.5" fill="#6a6a6a"/></svg>
<svg style="left:1250.5px;top:1386px;" width="24" height="25" viewBox="0 0 24 25"><path d="M12 0L24 12H17V25H7V12H0Z" fill="#c2c2c2"/></svg>
<svg style="left:1299.7px;top:1386px;" width="24" height="25" viewBox="0 0 24 25"><path d="M12 25L24 13H17V0H7V13H0Z" fill="#3d9ad6"/></svg>
<svg style="left:221px;top:1432px;" width="27" height="28" viewBox="0 0 27 28"><rect x="1" y="1" width="17" height="17" fill="none" stroke="#9a9a9a" stroke-width="1.6"/><rect x="5" y="5" width="17" height="17" fill="none" stroke="#9a9a9a" stroke-width="1.6"/><rect x="9" y="9" width="17" height="18" fill="#5b9be0" stroke="#777" stroke-width="2"/><path d="M15 13L12 16L15 19M19 18L22 21L19 24" fill="none" stroke="#444" stroke-width="1.3"/></svg>
<div class="t" style="left:257px;top:1432.9px;font-size:26px;color:#fff;letter-spacing:0.62px;">Foo.php:9, <i>App|Acme|Foo-&gt;getName()</i></div>
<svg style="left:221px;top:1471px;" width="27" height="28" viewBox="0 0 27 28"><rect x="1" y="1" width="17" height="17" fill="none" stroke="#9a9a9a" stroke-width="1.6"/><rect x="5" y="5" width="17" height="17" fill="none" stroke="#9a9a9a" stroke-width="1.6"/><rect x="9" y="9" width="17" height="18" fill="#a8d4f0" stroke="#777" stroke-width="2"/><path d="M15 13L12 16L15 19M19 18L22 21L19 24" fill="none" stroke="#444" stroke-width="1.3"/></svg>
<div class="t" style="left:257px;top:1473.9px;font-size:26px;color:#111;letter-spacing:0.62px;">index.php:10, <i>{main}()</i></div>
<svg style="left:1348.8px;top:1381px;" width="31" height="31" viewBox="0 0 31 31"><path d="M10 0V16M2 8H18" stroke="#2aa44b" stroke-width="4"/><circle cx="7" cy="23" r="6.5" fill="#5fb85a" stroke="#3e8e3a" stroke-width="1"/><circle cx="16" cy="24" r="6.5" fill="#5fb85a" stroke="#3e8e3a" stroke-width="1"/><path d="M22 22L29 12" stroke="#555" stroke-width="1.5"/></svg>
<div class="a" style="left:1352px;top:1444px;width:24px;height:4px;background:#bdbdbd;"></div>
<svg style="left:1353px;top:1490px;" width="22" height="12" viewBox="0 0 22 12"><path d="M0 12L11 0L22 12Z" fill="#c4c4c4"/></svg>
<svg style="left:1353px;top:1540px;" width="22" height="12" viewBox="0 0 22 12"><path d="M0 0L11 12L22 0Z" fill="#c4c4c4"/></svg>
<svg style="left:1350px;top:1580px;" width="28" height="32" viewBox="0 0 28 32"><path d="M8 0H16L21 5V24H8Z" fill="none" stroke="#cfcfcf" stroke-width="2.4"/><path d="M1 8H9L14 13V31H1Z" fill="#ececec" stroke="#cfcfcf" stroke-width="2.4"/></svg>
<div class="a" style="left:1342px;top:1624px;width:45px;height:45px;background:#dcdcdc;border:1.5px solid #c8c8c8;border-radius:5px;"></div>
<svg style="left:1349px;top:1632px;" width="30" height="30" viewBox="0 0 30 30"><rect x="2" y="0" width="26" height="5" fill="#4d95c6"/><rect x="2" y="5" width="26" height="17" fill="#9a9a9a"/><circle cx="7" cy="22" r="6.5" fill="#5fb85a" stroke="#3e8e3a" stroke-width="1"/><circle cx="16" cy="23" r="6.5" fill="#5fb85a" stroke="#3e8e3a" stroke-width="1"/><path d="M4 14Q8 6 12 14M20 16Q24 8 28 14" fill="none" stroke="#555" stroke-width="1.4"/></svg>
<svg style="left:1439.7px;top:1380px;" width="25" height="24" viewBox="0 0 25 24"><rect x="0" y="0" width="25" height="6" fill="#c19a62"/><rect x="0" y="9" width="25" height="6" fill="#c19a62"/><rect x="0" y="18" width="25" height="6" fill="#c19a62"/></svg>
<div class="t" style="left:1473px;top:1376.9px;font-size:26px;letter-spacing:1.16px;color:#000;"><span style="color:#7f0000">$this</span> = <span style="color:#808080">{App\Acme\Foo}</span> [0]</div>
<svg style="left:1400px;top:1418px;" width="16" height="19" viewBox="0 0 16 19"><path d="M0 0L16 9.5L0 19Z" fill="#a4a4a4"/></svg>
<svg style="left:1438px;top:1414px;" width="28" height="30" viewBox="0 0 28 30"><text x="3" y="9.8" font-family="Liberation Sans" font-size="10.5" font-weight="bold" fill="#1b5e8e" text-anchor="middle">1</text><text x="3" y="19.8" font-family="Liberation Sans" font-size="10.5" font-weight="bold" fill="#1b5e8e" text-anchor="middle">2</text><text x="3" y="29.8" font-family="Liberation Sans" font-size="10.5" font-weight="bold" fill="#1b5e8e" text-anchor="middle">3</text><rect x="11.2" y="2" width="14.5" height="6.5" fill="none" stroke="#474747" stroke-width="2.2"/><rect x="11.2" y="12" width="14.5" height="6.5" fill="none" stroke="#474747" stroke-width="2.2"/><rect x="11.2" y="22" width="14.5" height="6.5" fill="none" stroke="#474747" stroke-width="2.2"/></svg>
<div class="t" style="left:1473px;top:1414.9px;font-size:26px;letter-spacing:0.28px;color:#000;"><span style="color:#7f0000">$_COOKIE</span> = <span style="color:#808080">{array}</span> [11]</div>
<svg style="left:1400px;top:1456px;" width="16" height="19" viewBox="0 0 16 19"><path d="M0 0L16 9.5L0 19Z" fill="#a4a4a4"/></svg>
<svg style="left:1438px;top:1452px;" width="28" height="30" viewBox="0 0 28 30"><text x="3" y="9.8" font-family="Liberation Sans" font-size="10.5" font-weight="bold" fill="#1b5e8e" text-anchor="middle">1</text><text x="3" y="19.8" font-family="Liberation Sans" font-size="10.5" font-weight="bold" fill="#1b5e8e" text-anchor="middle">2</text><text x="3" y="29.8" font-family="Liberation Sans" font-size="10.5" font-weight="bold" fill="#1b5e8e" text-anchor="middle">3</text><rect x="11.2" y="2" width="14.5" height="6.5" fill="none" stroke="#474747" stroke-width="2.2"/><rect x="11.2" y="12" width="14.5" height="6.5" fill="none" stroke="#474747" stroke-width="2.2"/><rect x="11.2" y="22" width="14.5" height="6.5" fill="none" stroke="#474747" stroke-width="2.2"/></svg>
<div class="t" style="left:1473px;top:1452.9px;font-size:26px;letter-spacing:0.78px;color:#000;"><span style="color:#7f0000">$_ENV</span> = <span style="color:#808080">{array}</span> [49]</div>
<svg style="left:1400px;top:1494px;" width="16" height="19" viewBox="0 0 16 19"><path d="M0 0L16 9.5L0 19Z" fill="#a4a4a4"/></svg>
<svg style="left:1438px;top:1490px;" width="28" height="30" viewBox="0 0 28 30"><text x="3" y="9.8" font-family="Liberation Sans" font-size="10.5" font-weight="bold" fill="#1b5e8e" text-anchor="middle">1</text><text x="3" y="19.8" font-family="Liberation Sans" font-size="10.5" font-weight="bold" fill="#1b5e8e" text-anchor="middle">2</text><text x="3" y="29.8" font-family="Liberation Sans" font-size="10.5" font-weight="bold" fill="#1b5e8e" text-anchor="middle">3</text><rect x="11.2" y="2" width="14.5" height="6.5" fill="none" stroke="#474747" stroke-width="2.2"/><rect x="11.2" y="12" width="14.5" height="6.5" fill="none" stroke="#474747" stroke-width="2.2"/><rect x="11.2" y="22" width="14.5" height="6.5" fill="none" stroke="#474747" stroke-width="2.2"/></svg>
<div class="t" style="left:1473px;top:1490.9px;font-size:26px;letter-spacing:0.13px;color:#000;"><span style="color:#7f0000">$_REQUEST</span> = <span style="color:#808080">{array}</span> [11]</div>
<svg style="left:1400px;top:1532px;" width="16" height="19" viewBox="0 0 16 19"><path d="M0 0L16 9.5L0 19Z" fill="#a4a4a4"/></svg>
<svg style="left:1438px;top:1528px;" width="28" height="30" viewBox="0 0 28 30"><text x="3" y="9.8" font-family="Liberation Sans" font-size="10.5" font-weight="bold" fill="#1b5e8e" text-anchor="middle">1</text><text x="3" y="19.8" font-family="Liberation Sans" font-size="10.5" font-weight="bold" fill="#1b5e8e" text-anchor="middle">2</text><text x="3" y="29.8" font-family="Liberation Sans" font-size="10.5" font-weight="bold" fill="#1b5e8e" text-anchor="middle">3</text><rect x="11.2" y="2" width="14.5" height="6.5" fill="none" stroke="#474747" stroke-width="2.2"/><rect x="11.2" y="12" width="14.5" height="6.5" fill="none" stroke="#474747" stroke-width="2.2"/><rect x="11.2" y="22" width="14.5" height="6.5" fill="none" stroke="#474747" stroke-width="2.2"/></svg>
<div class="t" style="left:1473px;top:1528.9px;font-size:26px;letter-spacing:0.27px;color:#000;"><span style="color:#7f0000">$_SERVER</span> = <span style="color:#808080">{array}</span> [54]</div>
<svg style="left:1400px;top:1570px;" width="16" height="19" viewBox="0 0 16 19"><path d="M0 0L16 9.5L0 19Z" fill="#a4a4a4"/></svg>
<svg style="left:1438px;top:1566px;" width="28" height="30" viewBox="0 0 28 30"><text x="3" y="9.8" font-family="Liberation Sans" font-size="10.5" font-weight="bold" fill="#1b5e8e" text-anchor="middle">1</text><text x="3" y="19.8" font-family="Liberation Sans" font-size="10.5" font-weight="bold" fill="#1b5e8e" text-anchor="middle">2</text><text x="3" y="29.8" font-family="Liberation Sans" font-size="10.5" font-weight="bold" fill="#1b5e8e" text-anchor="middle">3</text><rect x="11.2" y="2" width="14.5" height="6.5" fill="none" stroke="#474747" stroke-width="2.2"/><rect x="11.2" y="12" width="14.5" height="6.5" fill="none" stroke="#474747" stroke-width="2.2"/><rect x="11.2" y="22" width="14.5" height="6.5" fill="none" stroke="#474747" stroke-width="2.2"/></svg>
<div class="t" style="left:1473px;top:1566.9px;font-size:26px;letter-spacing:0.52px;color:#000;"><span style="color:#7f0000">$GLOBALS</span> = <span style="color:#808080">{array}</span> [10]</div>
<div class="a" style="left:288px;top:1725px;width:170px;height:45px;background:#bdbdbd;"></div>
<svg style="left:174.5px;top:1736px;" width="22" height="27" viewBox="0 0 22 27"><path d="M0 0L22 13.5L0 27Z" fill="#2aa44b"/></svg>
<div class="t" style="left:206.6px;top:1737.3px;font-size:22px;color:#111;letter-spacing:-0.26px;"><u style="text-decoration-thickness:2px;text-underline-offset:3px">4</u>: Run</div>
<svg style="left:309px;top:1734px;" width="28.9" height="28.9" viewBox="0 0 28.9 28.9"><g transform="scale(0.85)"><g fill="none" stroke="#6a6a6a" stroke-width="1.5" stroke-linecap="round"><path d="M1.5 2.5Q5 2 7 6.5M8.5 1.5Q10.5 3 10.5 6M18 6Q19 2.5 22.5 3"/><path d="M1.5 29.3Q5 29.8 7 25.3M8.5 30.3Q10.5 28.8 10.5 25.8M18 25.8Q19 29.3 22.5 28.8"/><path d="M24 10Q25 8 29.5 8.5M24.5 14.5H27M24.5 17.5H27M24 21.5Q25 24 28 24.5"/></g><ellipse cx="12.3" cy="15.9" rx="10.2" ry="9.8" fill="#3aa655"/><path d="M3 11Q12 4 21 9" stroke="#5cc274" stroke-width="2" fill="none" opacity="0.6"/><path d="M2.3 15.9H19" stroke="#2a8443" stroke-width="1.3"/><ellipse cx="21.3" cy="15.9" rx="4.4" ry="7.6" fill="#bdbdbd"/><ellipse cx="21.2" cy="15.9" rx="2.9" ry="6" fill="#6a6a6a"/><circle cx="28.2" cy="28.1" r="4.2" fill="#19d419" stroke="#5a5a5a" stroke-width="0.9"/></g></svg>
<div class="t" style="left:344.3px;top:1737.3px;font-size:22px;color:#111;letter-spacing:0.39px;"><u style="text-decoration-thickness:2px;text-underline-offset:3px">5</u>: Debug</div>
<svg style="left:480px;top:1735px;" width="27" height="29" viewBox="0 0 27 29"><path d="M13 9Q13 2 20 2.5Q26.5 3 26 10V13H13Z" fill="#6b6b6b"/><rect x="8" y="10" width="18.5" height="13" rx="3" fill="#f0bc78"/><rect x="11.5" y="13.5" width="3" height="1.6" fill="#6b5a45"/><rect x="17" y="13.5" width="3" height="1.6" fill="#6b5a45"/><path d="M10 29L12 23H22L24 29Z" fill="#3d8fc6"/><circle cx="6.5" cy="6.5" r="6" fill="#fff" stroke="#7a7a7a" stroke-width="1.3"/><path d="M3.5 5H9.5M3.5 7.3H9.5M3.5 9.6H9.5" stroke="#555" stroke-width="0.9"/></svg>
<div class="t" style="left:514.3px;top:1737.3px;font-size:22px;color:#111;letter-spacing:0.08px;"><u style="text-decoration-thickness:2px;text-underline-offset:3px">6</u>: TODO</div>
<svg style="left:648px;top:1737px;" width="27" height="30" viewBox="0 0 27 30"><path d="M6 8L13 18M21 8L13 18" stroke="#7f909b" stroke-width="2"/><circle cx="5" cy="5.5" r="5" fill="#1ea2dc"/><circle cx="22" cy="5.5" r="5" fill="#9aa7b0"/><circle cx="13" cy="19.8" r="5" fill="#9aa7b0"/></svg>
<div class="t" style="left:682.5px;top:1737.3px;font-size:22px;color:#111;letter-spacing:0.28px;"><u style="text-decoration-thickness:2px;text-underline-offset:3px">9</u>: Version Control</div>
<svg style="left:910px;top:1736px;" width="26" height="26" viewBox="0 0 26 26"><rect x="0" y="0" width="26" height="26" fill="#777"/><rect x="2" y="6" width="22" height="18" fill="#e6e6e6"/><rect x="4" y="8" width="18" height="14" fill="#5a5a5a"/><path d="M7 11.5L11.5 14.5L7 17.5M12 18.5H19" fill="none" stroke="#fff" stroke-width="1.5"/></svg>
<div class="t" style="left:944.4px;top:1737.3px;font-family:'Liberation Sans',sans-serif;font-size:22px;color:#111;letter-spacing:0.62px;">Terminal</div>
<svg style="left:1075px;top:1737px;" width="28" height="25" viewBox="0 0 28 25"><rect x="10.5" y="0.5" width="4.2" height="3.8" fill="#1ea2dc"/><rect x="5.5" y="5.5" width="4.2" height="3.8" fill="#1ea2dc"/><rect x="10.5" y="5.5" width="4.2" height="3.8" fill="#1ea2dc"/><path d="M0.5 10.5H20.5Q21 7 23.5 4.5Q24.5 7 24 8.5Q26 8 27.5 9Q26 12 22.5 12.5Q19.5 24 8.5 24Q1 23 0.5 10.5Z" fill="#1ea2dc"/><circle cx="6.5" cy="14.5" r="1.6" fill="none" stroke="#fff" stroke-width="0.9"/></svg>
<div class="t" style="left:1110.0px;top:1737.3px;font-family:'Liberation Sans',sans-serif;font-size:22px;color:#111;letter-spacing:0.36px;">Docker</div>
<svg style="left:2787px;top:1734px;" width="33" height="28" viewBox="0 0 33 28"><path d="M16 1C7 1 1 6 1 12.5C1 19 7 23.5 15 23.5L19 27L20 22.5C27 21 31 17 31 12.5C31 6 25 1 16 1Z" fill="none" stroke="#777" stroke-width="2"/></svg>
<div class="t" style="left:2829.0px;top:1737.3px;font-family:'Liberation Sans',sans-serif;font-size:22px;color:#111;letter-spacing:0.02px;">Event Log</div>
<svg style="left:122px;top:1778px;" width="28" height="28" viewBox="0 0 28 28"><rect x="1" y="1" width="26" height="22" fill="#c4c4c4" stroke="#7a7a7a" stroke-width="2"/><rect x="1" y="25" width="26" height="2" fill="#7a7a7a"/></svg>
<div class="t" style="left:175.4px;top:1780.9px;font-family:'Liberation Sans',sans-serif;font-size:22px;color:#111;letter-spacing:0.47px;">Tests Passed: 1 passed (27 minutes ago)</div>
<div class="t" style="left:2443.0px;top:1780.9px;font-family:'Liberation Sans',sans-serif;font-size:22px;color:#111;letter-spacing:-1.29px;">9:1</div>
<div class="t" style="left:2495.0px;top:1780.9px;font-family:'Liberation Sans',sans-serif;font-size:22px;color:#111;letter-spacing:-3.17px;">LF</div>
<svg style="left:2519.5px;top:1784px;" width="11" height="17" viewBox="0 0 11 17"><path d="M0 7L5.5 0L11 7Z M0 10L5.5 17L11 10Z" fill="#555"/></svg>
<div class="t" style="left:2553.2px;top:1780.9px;font-family:'Liberation Sans',sans-serif;font-size:22px;color:#111;letter-spacing:0.37px;">UTF-8</div>
<svg style="left:2619px;top:1784px;" width="11" height="17" viewBox="0 0 11 17"><path d="M0 7L5.5 0L11 7Z M0 10L5.5 17L11 10Z" fill="#555"/></svg>
<div class="t" style="left:2650.7px;top:1780.9px;font-family:'Liberation Sans',sans-serif;font-size:22px;color:#111;letter-spacing:0.70px;">Git: feature/phpunit</div>
<svg style="left:2857.9px;top:1784px;" width="11" height="17" viewBox="0 0 11 17"><path d="M0 7L5.5 0L11 7Z M0 10L5.5 17L11 10Z" fill="#555"/></svg>
<svg style="left:2905px;top:1783px;" width="19" height="19" viewBox="0 0 19 19"><path d="M3 8V5Q3 1 6.5 1Q10 1 10 5" fill="none" stroke="#777" stroke-width="1.6"/><rect x="6" y="8" width="13" height="11" rx="1.5" fill="#777"/><rect x="11.5" y="11" width="2" height="5" fill="#eee"/></svg>
<svg style="left:2951px;top:1778px;" width="26" height="28" viewBox="0 0 26 28"><path d="M6 10V4Q6 0 13 0Q20 0 20 4V10" fill="none" stroke="#777" stroke-width="1.8"/><circle cx="13" cy="5" r="2" fill="#777"/><path d="M0 10H26" stroke="#777" stroke-width="1.8"/><path d="M5 11Q4 22 13 22Q22 22 21 11" fill="none" stroke="#777" stroke-width="1.8"/><path d="M8 17Q13 13 18 17" fill="none" stroke="#777" stroke-width="1.8"/><path d="M3 27L7 22H19L23 27" fill="none" stroke="#777" stroke-width="1.8"/></svg>
</div></div>
</body></html>
